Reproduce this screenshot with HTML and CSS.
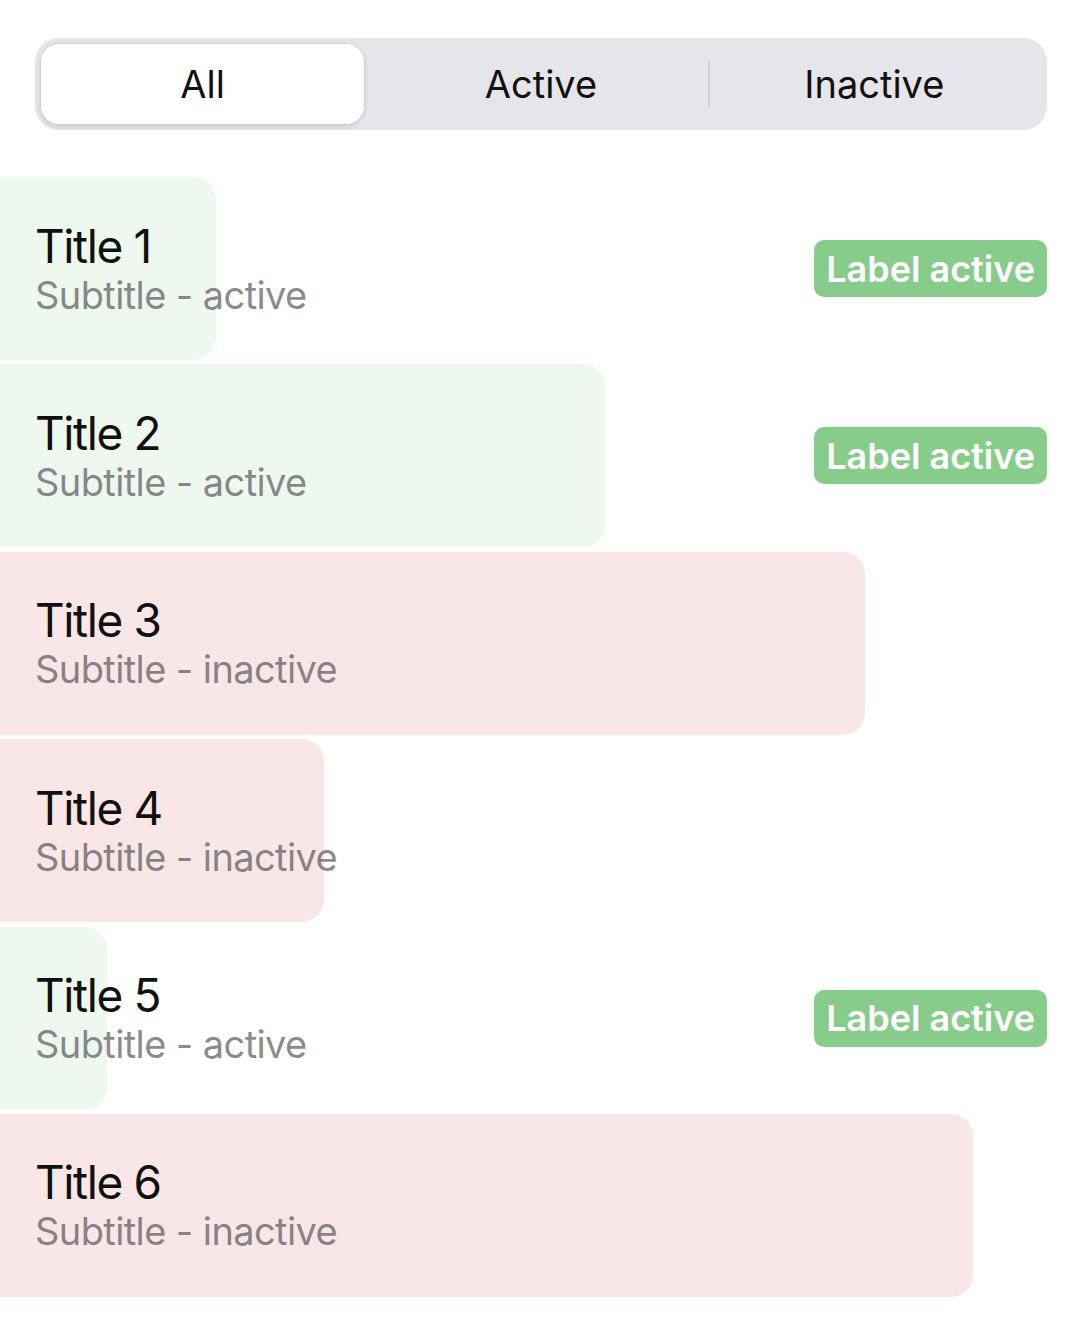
FILE: index.html
```html
<!DOCTYPE html>
<html>
<head>
<meta charset="utf-8">
<link rel="stylesheet" href="styles.css">
</head>
<body>
<div class="segmented">
  <div class="seg selected">All</div>
  <div class="seg">Active</div>
  <div class="seg sep">Inactive</div>
</div>
<div class="list">
  <div class="row active">
    <div class="bar" style="width:216px"></div>
    <div class="texts"><div class="title">Title 1</div><div class="subtitle">Subtitle - active</div></div>
    <div class="badge">Label active</div>
  </div>
  <div class="row active">
    <div class="bar" style="width:605px"></div>
    <div class="texts"><div class="title">Title 2</div><div class="subtitle">Subtitle - active</div></div>
    <div class="badge">Label active</div>
  </div>
  <div class="row inactive">
    <div class="bar" style="width:865px"></div>
    <div class="texts"><div class="title">Title 3</div><div class="subtitle">Subtitle - inactive</div></div>
  </div>
  <div class="row inactive">
    <div class="bar" style="width:324px"></div>
    <div class="texts"><div class="title">Title 4</div><div class="subtitle">Subtitle - inactive</div></div>
  </div>
  <div class="row active">
    <div class="bar" style="width:107px"></div>
    <div class="texts"><div class="title">Title 5</div><div class="subtitle">Subtitle - active</div></div>
    <div class="badge">Label active</div>
  </div>
  <div class="row inactive">
    <div class="bar" style="width:973px"></div>
    <div class="texts"><div class="title">Title 6</div><div class="subtitle">Subtitle - inactive</div></div>
  </div>
</div>
</body>
</html>
```
FILE: styles.css
```css
html, body {
  margin: 0;
  padding: 0;
  background: #ffffff;
  font-family: Inter, "Noto Sans", sans-serif;
}
.segmented {
  margin: 38px 35px 0 35px;
  height: 92px;
  background: #e6e5e9;
  border-radius: 24px;
  display: grid;
  grid-template-columns: 1fr 1fr 1fr;
  padding: 6px;
  box-sizing: border-box;
}
.seg {
  display: flex;
  align-items: center;
  justify-content: center;
  font-size: 38px;
  color: #111111;
  border-radius: 18px;
  position: relative;
}
.seg.selected {
  background: #ffffff;
  box-shadow: 0 2px 6px rgba(0,0,0,0.12), 0 0 0 1px rgba(0,0,0,0.03);
  margin-right: 10px;
}
.seg.sep::before {
  content: "";
  position: absolute;
  left: 0;
  top: 16px;
  bottom: 16px;
  width: 2px;
  background: #d0cfd3;
}
.list {
  margin-top: 47px;
  display: flex;
  flex-direction: column;
  gap: 4.4px;
}
.row {
  position: relative;
  height: 183px;
  display: flex;
  align-items: center;
  justify-content: space-between;
  padding: 0 35px 0 35px;
}
.bar {
  position: absolute;
  left: 0;
  top: 0;
  bottom: 0;
  border-radius: 0 22px 22px 0;
}
.row.active .bar { background: #eef8ef; }
.row.inactive .bar { background: #f9e6e6; }
.texts {
  position: relative;
  display: flex;
  flex-direction: column;
}
.title {
  font-size: 46px;
  color: #111111;
  line-height: 52px;
  letter-spacing: -1.4px;
}
.subtitle {
  font-size: 38px;
  color: rgba(60,60,67,0.6);
  line-height: 46px;
  letter-spacing: -0.6px;
}
.badge {
  position: relative;
  background: #88cc8b;
  color: #ffffff;
  font-size: 36px;
  font-weight: 600;
  height: 57px;
  display: flex;
  align-items: center;
  padding: 0 12px;
  border-radius: 10px;
}
```
